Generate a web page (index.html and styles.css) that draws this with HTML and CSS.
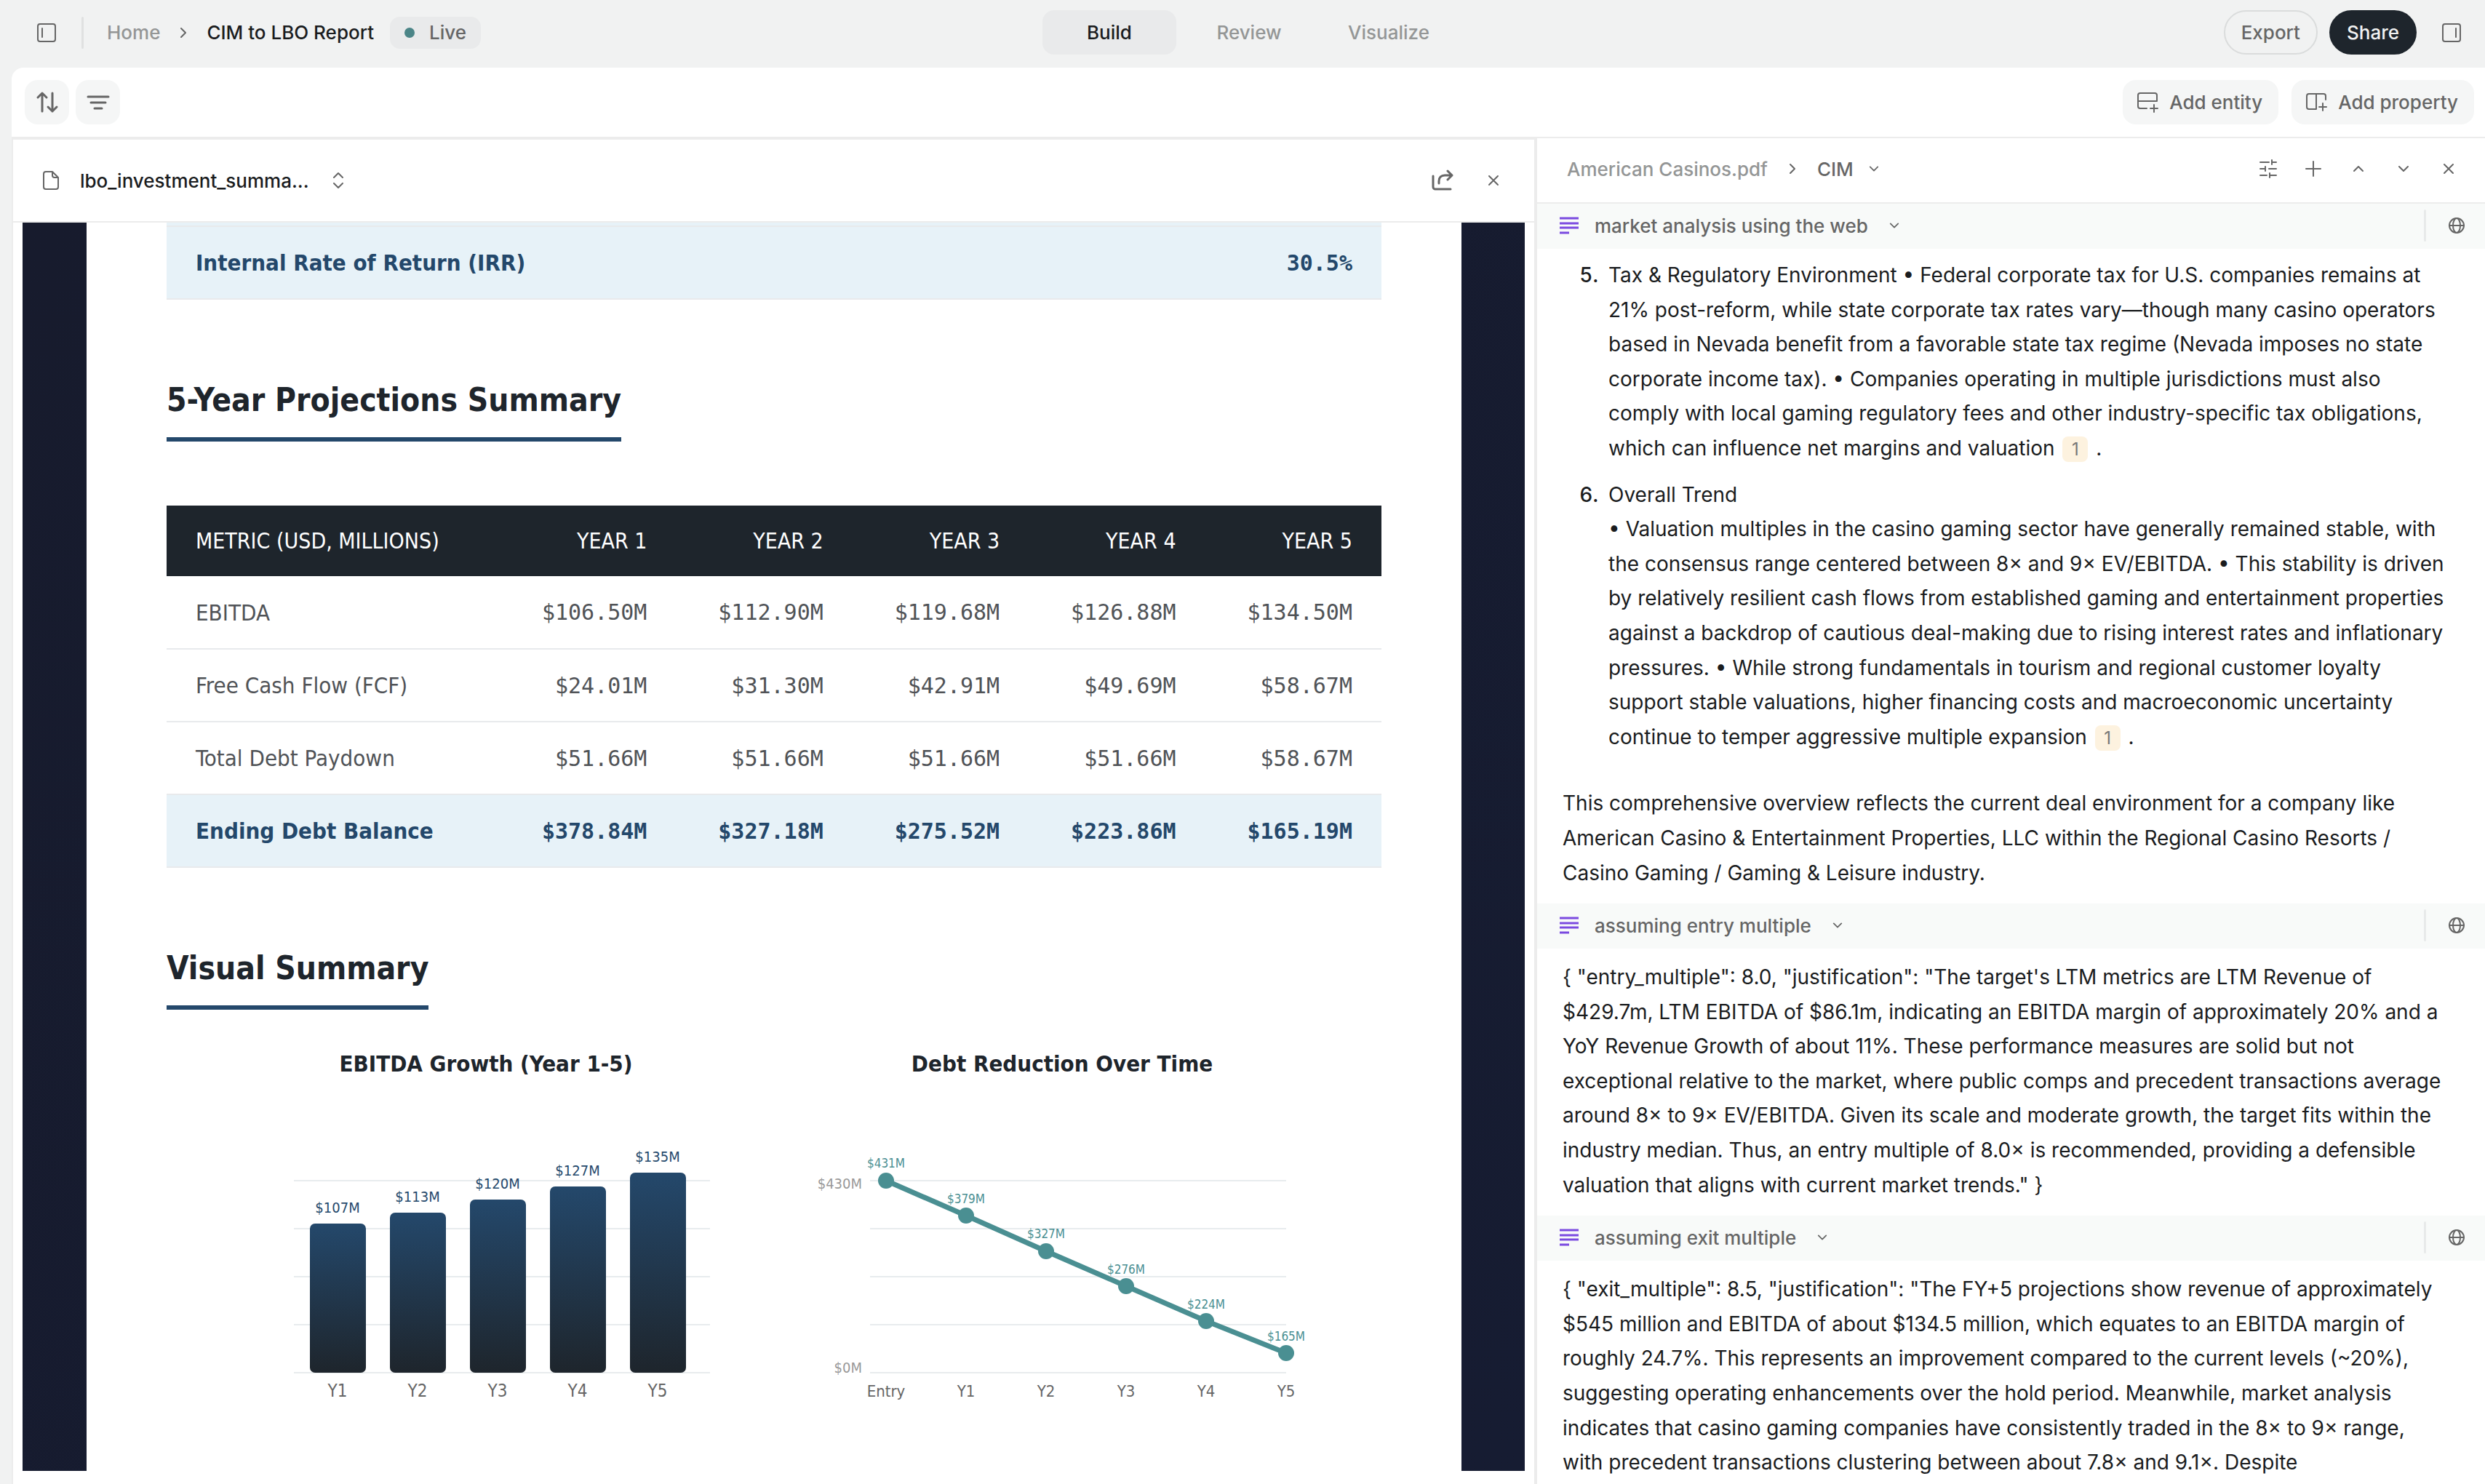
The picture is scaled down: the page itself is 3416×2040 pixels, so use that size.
FILE: index.html
```html
<!DOCTYPE html>
<html lang="en">
<head>
  <meta charset="UTF-8" />
  <meta name="viewport" content="width=device-width, initial-scale=1.0"/>
  <title>CIM to LBO Report</title>

  <link rel="stylesheet" href="styles.css">
</head>
<body>

  <!-- Shared icons -->
  <svg class="sprite" aria-hidden="true">
    <symbol id="i-right" viewBox="0 0 32 32"><path d="M13 10l6 6-6 6"/></symbol>
    <symbol id="i-down" viewBox="0 0 32 32"><path d="M10 13l6 6 6-6"/></symbol>
    <symbol id="i-up" viewBox="0 0 32 32"><path d="M10 19l6-6 6 6"/></symbol>
    <symbol id="i-close" viewBox="0 0 32 32"><path d="M10 10l12 12M22 10L10 22"/></symbol>
    <symbol id="i-text" viewBox="0 0 32 32"><path d="M3 6h26M3 13h26M3 19h26M3 26h13"/></symbol>
    <symbol id="i-globe" viewBox="0 0 32 32"><circle cx="16" cy="16" r="10"/><ellipse cx="16" cy="16" rx="5" ry="10"/><path d="M6 16h20"/></symbol>
  </svg>

  <div class="app">
    <header class="topbar">
      <div class="topbar-left">
        <button class="icon-btn" aria-label="Toggle left sidebar">
          <svg class="icon" viewBox="0 0 32 32"><rect x="4" y="4" width="24" height="24" rx="3"/><path d="M10 10v12"/></svg>
        </button>
        <span class="divider"></span>
        <nav class="crumbs">
          <a href="#">Home</a>
          <svg class="icon"><use href="#i-right"/></svg>
          <span class="crumb-current">CIM to LBO Report</span>
        </nav>
        <span class="status"><span class="status-dot"></span>Live</span>
      </div>

      <nav class="tabs">
        <button class="tab active">Build</button>
        <button class="tab">Review</button>
        <button class="tab">Visualize</button>
      </nav>

      <div class="topbar-right">
        <button class="pill">Export</button>
        <button class="pill pill-dark">Share</button>
        <button class="icon-btn" aria-label="Toggle right sidebar">
          <svg class="icon" viewBox="0 0 32 32"><rect x="4" y="4" width="24" height="24" rx="3"/><path d="M22 10v12"/></svg>
        </button>
      </div>
    </header>

    <main class="workspace">
      <div class="toolbar">
        <button class="tool tool-square" aria-label="Sort">
          <svg class="icon" viewBox="0 0 32 32"><path d="M9 28V3M3 9l6-6 6 6M23 3v25M17 22l6 6 6-6"/></svg>
        </button>
        <button class="tool tool-square" aria-label="Filter">
          <svg class="icon" viewBox="0 0 32 32"><path d="M2 8h28M6 16h20M11 24h10"/></svg>
        </button>
        <span class="spacer"></span>
        <button class="tool">
          <svg class="icon" viewBox="0 0 32 32"><path d="M15 24H6a3 3 0 0 1-3-3V6a3 3 0 0 1 3-3h20a3 3 0 0 1 3 3v8H3M25 19v10M20 24h10"/></svg>
          Add entity
        </button>
        <button class="tool">
          <svg class="icon" viewBox="0 0 32 32"><path d="M16 4v21H6a3 3 0 0 1-3-3V7a3 3 0 0 1 3-3h20a3 3 0 0 1 3 3v5M25 17v10M20 22h10"/></svg>
          Add property
        </button>
      </div>

      <div class="panes">
        <!-- Report preview -->
        <section class="preview">
          <div class="preview-head">
            <svg class="icon" viewBox="0 0 32 32"><path d="M9 4h9l8 8v13a3 3 0 0 1-3 3H9a3 3 0 0 1-3-3V7a3 3 0 0 1 3-3zM18 4v5a3 3 0 0 0 3 3h5"/></svg>
            <button class="file-select">lbo_investment_summa...
              <svg class="icon" viewBox="0 0 32 32"><path d="M10 12l6-6 6 6M10 20l6 6 6-6"/></svg>
            </button>
            <span class="spacer"></span>
            <button class="icon-btn" aria-label="Open">
              <svg class="icon icon-bold" viewBox="0 0 32 32"><path d="M3 10v15a3 3 0 0 0 3 3h21M11 20v-3c0-5 3-8 8-8h10M23 3l6 6-6 6"/></svg>
            </button>
            <button class="icon-btn" aria-label="Close preview"><svg class="icon"><use href="#i-close"/></svg></button>
          </div>

          <div class="document">
            <article class="page">
              <table class="metrics returns">
                <tbody>
                  <tr class="highlight sliver"><td></td><td></td></tr>
                  <tr class="highlight"><th scope="row">Internal Rate of Return (IRR)</th><td>30.5%</td></tr>
                </tbody>
              </table>

              <h2>5-Year Projections Summary</h2>

              <table class="metrics projections">
                <thead>
                  <tr><th scope="col">METRIC (USD, MILLIONS)</th><th scope="col">YEAR 1</th><th scope="col">YEAR 2</th><th scope="col">YEAR 3</th><th scope="col">YEAR 4</th><th scope="col">YEAR 5</th></tr>
                </thead>
                <tbody>
                  <tr><th scope="row">EBITDA</th><td>$106.50M</td><td>$112.90M</td><td>$119.68M</td><td>$126.88M</td><td>$134.50M</td></tr>
                  <tr><th scope="row">Free Cash Flow (FCF)</th><td>$24.01M</td><td>$31.30M</td><td>$42.91M</td><td>$49.69M</td><td>$58.67M</td></tr>
                  <tr><th scope="row">Total Debt Paydown</th><td>$51.66M</td><td>$51.66M</td><td>$51.66M</td><td>$51.66M</td><td>$58.67M</td></tr>
                  <tr class="highlight"><th scope="row">Ending Debt Balance</th><td>$378.84M</td><td>$327.18M</td><td>$275.52M</td><td>$223.86M</td><td>$165.19M</td></tr>
                </tbody>
              </table>

              <h2>Visual Summary</h2>

              <div class="charts">
                <figure>
                  <figcaption>EBITDA Growth (Year 1-5)</figcaption>
                  <svg class="chart" viewBox="0 0 660 440">
                    <defs>
                      <linearGradient id="bar" x1="0" y1="0" x2="0" y2="1">
                        <stop offset="0" stop-color="#24486b"/>
                        <stop offset="1" stop-color="#1e252c"/>
                      </linearGradient>
                    </defs>
                    <path class="grid" d="M66 132h572M66 198h572M66 264h572M66 330h572M66 396h572"/>
                    <g fill="url(#bar)">
                      <rect x="88" y="191" width="77" height="205" rx="7"/>
                      <rect x="198" y="176" width="77" height="220" rx="7"/>
                      <rect x="308" y="158" width="77" height="238" rx="7"/>
                      <rect x="418" y="140" width="77" height="256" rx="7"/>
                      <rect x="528" y="121" width="77" height="275" rx="7"/>
                    </g>
                    <g class="bar-value">
                      <text x="126" y="176">$107M</text>
                      <text x="236" y="161">$113M</text>
                      <text x="346" y="143">$120M</text>
                      <text x="456" y="125">$127M</text>
                      <text x="566" y="106">$135M</text>
                    </g>
                    <g class="axis">
                      <text x="126" y="429">Y1</text>
                      <text x="236" y="429">Y2</text>
                      <text x="346" y="429">Y3</text>
                      <text x="456" y="429">Y4</text>
                      <text x="566" y="429">Y5</text>
                    </g>
                  </svg>
                </figure>
                <figure>
                  <figcaption>Debt Reduction Over Time</figcaption>
                  <svg class="chart" viewBox="0 0 660 440">
                    <path class="grid" d="M66 132h572M66 198h572M66 264h572M66 330h572M66 396h572"/>
                    <polyline class="line" points="88,132 198,180 308,229 418,277 528,325 638,369"/>
                    <g class="dots">
                      <circle cx="88" cy="132" r="11"/>
                      <circle cx="198" cy="180" r="11"/>
                      <circle cx="308" cy="229" r="11"/>
                      <circle cx="418" cy="277" r="11"/>
                      <circle cx="528" cy="325" r="11"/>
                      <circle cx="638" cy="369" r="11"/>
                    </g>
                    <g class="line-value">
                      <text x="88" y="114">$431M</text>
                      <text x="198" y="163">$379M</text>
                      <text x="308" y="211">$327M</text>
                      <text x="418" y="260">$276M</text>
                      <text x="528" y="308">$224M</text>
                      <text x="638" y="352">$165M</text>
                    </g>
                    <g class="scale">
                      <text x="55" y="143">$430M</text>
                      <text x="55" y="396">$0M</text>
                    </g>
                    <g class="axis axis-small">
                      <text x="88" y="429">Entry</text>
                      <text x="198" y="429">Y1</text>
                      <text x="308" y="429">Y2</text>
                      <text x="418" y="429">Y3</text>
                      <text x="528" y="429">Y4</text>
                      <text x="638" y="429">Y5</text>
                    </g>
                  </svg>
                </figure>
              </div>
            </article>
          </div>
        </section>

        <!-- Source details -->
        <aside class="details">
          <div class="details-head">
            <a href="#">American Casinos.pdf</a>
            <svg class="icon"><use href="#i-right"/></svg>
            <button class="cim">CIM <svg class="icon icon-sm"><use href="#i-down"/></svg></button>
            <span class="spacer"></span>
            <button class="icon-btn" aria-label="Settings">
              <svg class="icon" viewBox="0 0 32 32"><path d="M5 7h12M21 7h6M21 4v6M5 16h7M12 13v6M17 16h10M5 25h9M18 22v6M18 25h9"/></svg>
            </button>
            <button class="icon-btn" aria-label="Add"><svg class="icon" viewBox="0 0 32 32"><path d="M16 6v20M6 16h20"/></svg></button>
            <button class="icon-btn" aria-label="Previous"><svg class="icon"><use href="#i-up"/></svg></button>
            <button class="icon-btn" aria-label="Next"><svg class="icon"><use href="#i-down"/></svg></button>
            <button class="icon-btn" aria-label="Close details"><svg class="icon"><use href="#i-close"/></svg></button>
          </div>

          <div class="prop-head">
            <svg class="icon icon-text"><use href="#i-text"/></svg>
            <button class="prop-name">market analysis using the web <svg class="icon icon-sm"><use href="#i-down"/></svg></button>
            <span class="spacer"></span>
            <span class="divider"></span>
            <button class="icon-btn" aria-label="Web source"><svg class="icon"><use href="#i-globe"/></svg></button>
          </div>
          <div class="prop-body">
            <ol start="5">
              <li>Tax &amp; Regulatory Environment • Federal corporate tax for U.S. companies remains at 21% post-reform, while state corporate tax rates vary—though many casino operators based in Nevada benefit from a favorable state tax regime (Nevada imposes no state corporate income tax). • Companies operating in multiple jurisdictions must also comply with local gaming regulatory fees and other industry-specific tax obligations, which can influence net margins and valuation <a class="cite" href="#">1</a> .</li>
              <li>Overall Trend<br>• Valuation multiples in the casino gaming sector have generally remained stable, with the consensus range centered between 8× and 9× EV/EBITDA. • This stability is driven by relatively resilient cash flows from established gaming and entertainment properties against a backdrop of cautious deal-making due to rising interest rates and inflationary pressures. • While strong fundamentals in tourism and regional customer loyalty support stable valuations, higher financing costs and macroeconomic uncertainty continue to temper aggressive multiple expansion <a class="cite" href="#">1</a> .</li>
            </ol>
            <p>This comprehensive overview reflects the current deal environment for a company like American Casino &amp; Entertainment Properties, LLC within the Regional Casino Resorts / Casino Gaming / Gaming &amp; Leisure industry.</p>
          </div>

          <div class="prop-head">
            <svg class="icon icon-text"><use href="#i-text"/></svg>
            <button class="prop-name">assuming entry multiple <svg class="icon icon-sm"><use href="#i-down"/></svg></button>
            <span class="spacer"></span>
            <span class="divider"></span>
            <button class="icon-btn" aria-label="Web source"><svg class="icon"><use href="#i-globe"/></svg></button>
          </div>
          <div class="prop-body">
            <p>{ "entry_multiple": 8.0, "justification": "The target's LTM metrics are LTM Revenue of $429.7m, LTM EBITDA of $86.1m, indicating an EBITDA margin of approximately 20% and a YoY Revenue Growth of about 11%. These performance measures are solid but not exceptional relative to the market, where public comps and precedent transactions average around 8× to 9× EV/EBITDA. Given its scale and moderate growth, the target fits within the industry median. Thus, an entry multiple of 8.0× is recommended, providing a defensible valuation that aligns with current market trends." }</p>
          </div>

          <div class="prop-head">
            <svg class="icon icon-text"><use href="#i-text"/></svg>
            <button class="prop-name">assuming exit multiple <svg class="icon icon-sm"><use href="#i-down"/></svg></button>
            <span class="spacer"></span>
            <span class="divider"></span>
            <button class="icon-btn" aria-label="Web source"><svg class="icon"><use href="#i-globe"/></svg></button>
          </div>
          <div class="prop-body">
            <p>{ "exit_multiple": 8.5, "justification": "The FY+5 projections show revenue of approximately $545 million and EBITDA of about $134.5 million, which equates to an EBITDA margin of roughly 24.7%. This represents an improvement compared to the current levels (~20%), suggesting operating enhancements over the hold period. Meanwhile, market analysis indicates that casino gaming companies have consistently traded in the 8× to 9× range, with precedent transactions clustering between about 7.8× and 9.1×. Despite</p>
          </div>
        </aside>
      </div>
    </main>
  </div>

</body>
</html>
```

FILE: styles.css
```css
* {
  margin: 0;
  padding: 0;
  box-sizing: border-box;
}

@counter-style steps {
  system: extends decimal;
  suffix: ".\2002";
}

body {
  font-family: Inter, "Liberation Sans", sans-serif;
  font-size: 26px;
  color: #1a1c1e;
  background: #f1f2f2;
  overflow: hidden;
}

a {
  color: inherit;
  text-decoration: none;
}

button {
  font: inherit;
  color: inherit;
  background: none;
  border: none;
  cursor: pointer;
}

.sprite {
  position: absolute;
  width: 0;
  height: 0;
}

.icon {
  width: 32px;
  height: 32px;
  flex-shrink: 0;
  fill: none;
  stroke: #666;
  stroke-width: 2;
  stroke-linecap: round;
  stroke-linejoin: round;
}

.icon-btn {
  display: flex;
  align-items: center;
  justify-content: center;
}

.spacer {
  flex: 1;
}

.divider {
  width: 3px;
  height: 44px;
  border-radius: 2px;
  background: #e0e1e1;
}

.app {
  display: flex;
  flex-direction: column;
  height: 100vh;
}

/* Top bar */
.topbar {
  display: flex;
  align-items: center;
  height: 93px;
  padding: 0 30px 4px 48px;
  font-weight: 500;
  flex-shrink: 0;
}

.topbar-left,
.topbar-right {
  display: flex;
  align-items: center;
  flex: 1;
}

.topbar-left .divider {
  margin: 0 32px;
}

.topbar-right {
  justify-content: flex-end;
  gap: 16px;
}

.topbar-right .icon-btn {
  margin-left: 16px;
}

.crumbs {
  display: flex;
  align-items: center;
  gap: 16px;
  color: #949696;
}

.crumb-current {
  color: #1a1c1e;
}

.status {
  display: flex;
  align-items: center;
  gap: 20px;
  height: 44px;
  margin-left: 22px;
  padding: 0 20px;
  border-radius: 14px;
  background: #e9eaeb;
  color: #666;
}

.status-dot {
  width: 14px;
  height: 14px;
  border-radius: 50%;
  background: #4b8587;
}

.tabs {
  display: flex;
  gap: 8px;
}

.tab {
  width: 184px;
  height: 61px;
  border-radius: 16px;
  font-weight: 500;
  color: #949696;
}

.tab.active {
  background: #e9eaeb;
  color: #1a1c1e;
}

.pill {
  height: 61px;
  padding: 0 22px;
  border: 2px solid #dadcdc;
  border-radius: 31px;
  font-weight: 500;
  color: #666;
}

.pill-dark {
  border-color: #1e252c;
  background: #1e252c;
  color: #f1f2f2;
}

/* Workspace */
.workspace {
  display: flex;
  flex-direction: column;
  flex: 1;
  min-height: 0;
  margin-left: 16px;
  border-top-left-radius: 16px;
  background: #fff;
}

.toolbar {
  display: flex;
  align-items: center;
  gap: 9px;
  height: 97px;
  padding: 0 15px 0 18px;
  border-bottom: 2px solid #ececec;
  flex-shrink: 0;
}

.tool {
  display: flex;
  align-items: center;
  gap: 14px;
  height: 61px;
  padding: 0 22px 0 18px;
  border-radius: 18px;
  background: #f5f6f6;
  font-weight: 500;
  color: #666;
}

.tool + .tool:last-child {
  margin-left: 9px;
}

.tool-square {
  width: 61px;
  padding: 0;
  justify-content: center;
}

.tool-square .icon,
.icon-bold {
  stroke-width: 3;
}

.panes {
  display: flex;
  flex: 1;
  min-height: 0;
}

/* Report preview */
.preview {
  display: flex;
  flex-direction: column;
  flex: 1;
  min-width: 0;
  border: solid #ececec;
  border-width: 2px 4px 0 2px;
}

.preview-head {
  display: flex;
  align-items: center;
  height: 114px;
  padding: 0 40px 0 36px;
  border-bottom: 2px solid #ececec;
  font-weight: 500;
  flex-shrink: 0;
}

.preview-head .icon-btn {
  margin-left: 38px;
}

.file-select {
  display: flex;
  align-items: center;
  gap: 24px;
  margin-left: 24px;
}

.document {
  flex: 1;
  min-height: 0;
  margin: 0 13px 18px;
  padding: 0 87px 0 88px;
  overflow: hidden;
  background: linear-gradient(135deg, #171b2d, #161c32);
}

.page {
  height: 100%;
  padding: 0 110px;
  background: #fff;
  font-family: "DejaVu Sans Condensed", "DejaVu Sans", sans-serif;
  font-stretch: condensed;
}

.page h2 {
  width: fit-content;
  margin-bottom: 88px;
  padding-bottom: 25px;
  border-bottom: 6px solid #24486b;
  font-size: 44px;
  line-height: 52px;
  color: #1e252c;
}

.metrics {
  width: 100%;
  border-collapse: collapse;
  table-layout: fixed;
  font-size: 30px;
  color: #505357;
}

.metrics th,
.metrics td {
  height: 100px;
  padding: 0 40px;
  border-bottom: 2px solid #e8eaec;
  text-align: right;
  white-space: nowrap;
}

.metrics th {
  font-weight: 400;
}

.metrics th:first-child {
  text-align: left;
}

.metrics tbody th {
  font-size: 31px;
}

.metrics td {
  font-family: "DejaVu Sans Mono", monospace;
}

.metrics thead th {
  height: 97px;
  border: none;
  background: #1e252c;
  color: #fff;
}

.metrics .highlight {
  background: #e7f2f8;
  color: #24486b;
}

.metrics .highlight th,
.metrics .highlight td {
  font-weight: 700;
}

.metrics .sliver td {
  height: 5px;
}

.returns {
  margin-bottom: 112px;
}

.projections {
  margin-bottom: 112px;
}

.projections thead th:first-child {
  width: 458px;
}

.projections + h2 {
  margin-bottom: 54px;
}

.charts {
  display: grid;
  grid-template-columns: 1fr 1fr;
  padding: 0 43px;
}

.charts figure {
  display: flex;
  flex-direction: column;
  align-items: center;
}

.charts figcaption {
  font-size: 31px;
  line-height: 40px;
  font-weight: 700;
  color: #1e252c;
}

.chart {
  width: 660px;
  height: 440px;
  margin-top: 9px;
  overflow: visible;
}

.chart text {
  text-anchor: middle;
}

.chart .scale text {
  text-anchor: end;
}

.grid {
  stroke: #e8ecee;
  stroke-width: 2;
}

.bar-value {
  font-size: 20px;
  fill: #24486b;
}

.axis {
  font-size: 24px;
  fill: #666;
}

.axis-small {
  font-size: 22px;
}

.line {
  fill: none;
  stroke: #4a8f92;
  stroke-width: 7;
}

.dots {
  fill: #4a8f92;
}

.line-value {
  font-size: 17px;
  fill: #4a8f92;
}

.scale {
  font-size: 20px;
  fill: #999;
}

/* Source details */
.details {
  width: 1303px;
  overflow: hidden;
  flex-shrink: 0;
}

.details-head {
  display: flex;
  align-items: center;
  height: 90px;
  padding: 0 27px 4px 41px;
  border-bottom: 2px solid #ececec;
  font-weight: 500;
  color: #949696;
}

.details-head > .icon {
  margin: 0 18px;
}

.details-head .icon-btn {
  width: 46px;
  margin-left: 16px;
}

.cim,
.prop-name {
  display: flex;
  align-items: center;
  gap: 14px;
  font-weight: 500;
  color: #666;
}

.icon-sm {
  width: 28px;
  height: 28px;
}

.prop-head {
  display: flex;
  align-items: center;
  height: 62px;
  padding: 0 23px 2px 28px;
  background: #f8faf9;
}

.prop-name {
  margin-left: 19px;
  gap: 22px;
}

.prop-head .divider {
  margin-right: 26px;
  background: #e8eaea;
}

.icon-text {
  stroke: #7b4ae0;
  stroke-width: 3;
  stroke-linecap: butt;
}

.prop-body {
  padding: 16px 52px 18px 35px;
  font-size: 28px;
  line-height: 1.7;
}

.prop-body ol {
  margin: -3px 0 44px;
  padding-left: 63px;
  list-style: steps;
}

.prop-body li + li {
  margin-top: 16px;
}

.prop-body li::marker {
  font-weight: 500;
}

.cite {
  display: inline-block;
  width: 35px;
  height: 35px;
  margin: 0 3px;
  border-radius: 8px;
  background: #fdf2df;
  color: #777;
  font-size: 24px;
  line-height: 35px;
  text-align: center;
}
```
